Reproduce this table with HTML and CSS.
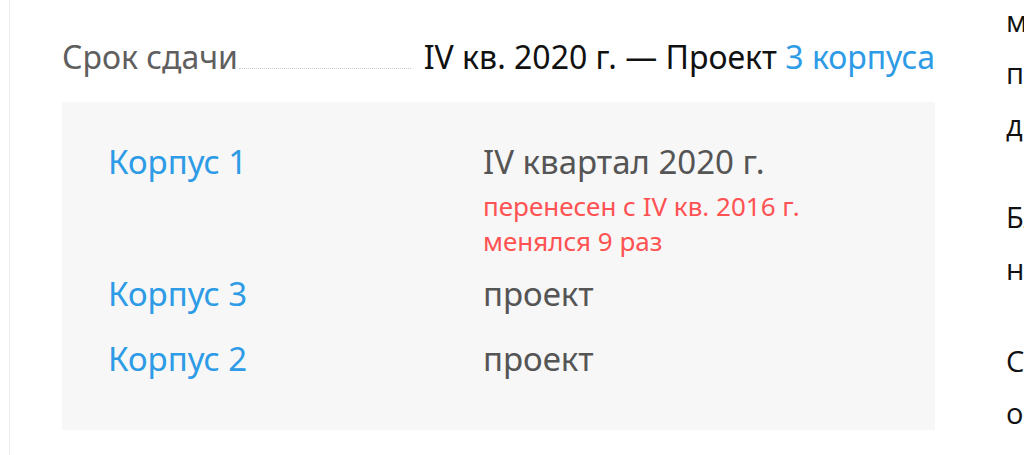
FILE: index.html
```html
<!DOCTYPE html>
<html lang="ru">
<head>
<meta charset="utf-8">
<link rel="stylesheet" href="styles.css">
</head>
<body>
<div class="page">
  <main class="main">
    <div class="deadline">
      <span class="label">Срок сдачи</span>
      <span class="leader"></span>
      <span class="value">IV кв. 2020 г. — Проект <a class="link" href="#">3 корпуса</a></span>
    </div>
    <div class="box">
      <div class="row">
        <a class="link corp" href="#">Корпус 1</a>
        <div class="status">
          <div class="date">IV квартал 2020 г.</div>
          <div class="note">перенесен с IV кв. 2016 г.<br>менялся 9 раз</div>
        </div>
      </div>
      <div class="row">
        <a class="link corp" href="#">Корпус 3</a>
        <div class="status"><div class="date">проект</div></div>
      </div>
      <div class="row">
        <a class="link corp" href="#">Корпус 2</a>
        <div class="status"><div class="date">проект</div></div>
      </div>
    </div>
  </main>
  <aside class="side">
    <p>многоэтажный</p>
    <p>паркинг</p>
    <p>детский</p>
    <p class="gap">Благоустройство</p>
    <p>новое</p>
    <p class="gap">Срок</p>
    <p>объявлен</p>
    <p>в</p>
  </aside>
</div>
</body>
</html>
```
FILE: styles.css
```css
html, body {
  margin: 0;
  padding: 0;
  background: #fff;
  overflow: hidden;
}
body {
  font-family: "Noto Sans", "Open Sans", sans-serif;
  width: 1024px;
  height: 455px;
}
.page {
  display: flex;
  height: 455px;
  padding-left: 9px;
  overflow: hidden;
}
.main {
  border-left: 1px solid #ececec;
  width: 873px;
  flex: none;
  padding: 37px 0 0 52px;
}
.deadline {
  display: flex;
  align-items: baseline;
  font-size: 32px;
  line-height: 40px;
  height: 65px;
}
.label {
  color: #5f5f5f;
}
.leader {
  flex: 1;
  border-bottom: 1px dotted #c8c8c8;
  margin: 0 13px 0 1px;
}
.value {
  color: #111;
}
.link {
  color: #2d9be6;
  text-decoration: none;
}
.box {
  background: #f7f7f7;
  height: 328px;
  box-sizing: border-box;
  padding: 40px 46px;
}
.row {
  display: flex;
  font-size: 33px;
  line-height: 40px;
  margin-bottom: 25px;
}
.corp {
  width: 375px;
  flex: none;
}
.date {
  color: #555;
}
.note {
  color: #ff5252;
  font-size: 26px;
  line-height: 35px;
  padding-top: 7px;
  margin-bottom: -10px;
}
.side {
  margin-left: 71px;
  margin-top: -5px;
  font-family: "Open Sans", sans-serif;
  font-size: 29px;
  color: #111;
  white-space: nowrap;
}
.side p {
  margin: 0;
  line-height: 52px;
}
.side p.gap {
  margin-top: 40px;
}
```
